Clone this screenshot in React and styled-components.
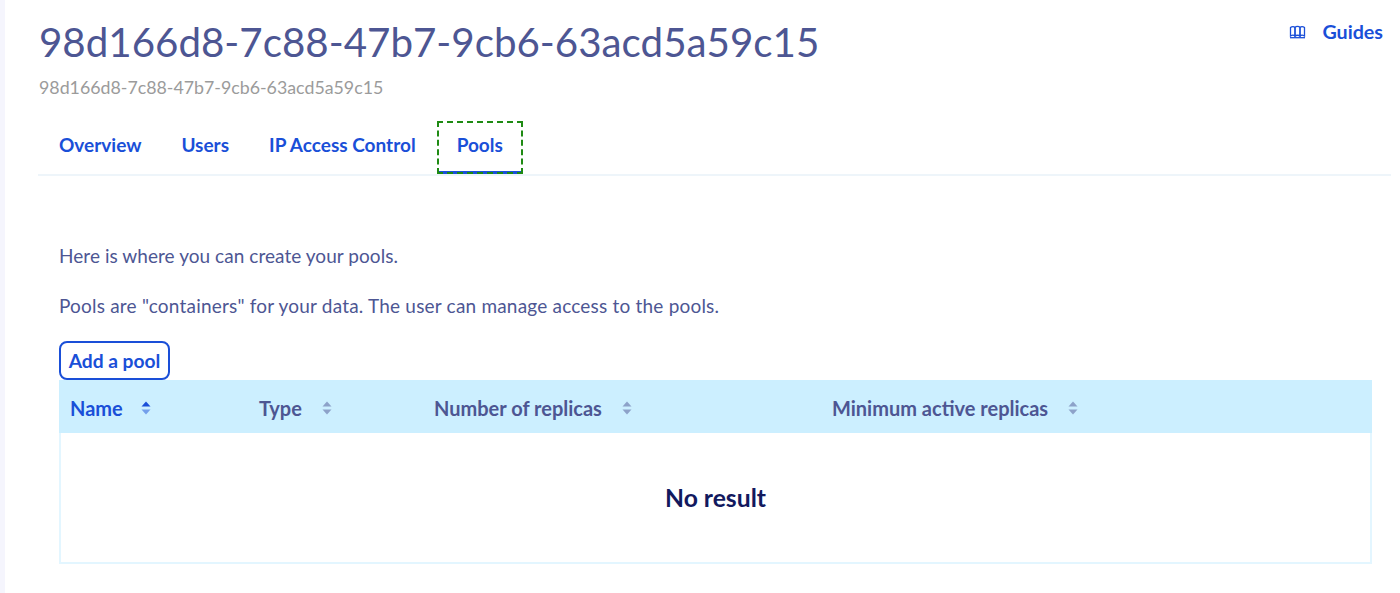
import styled, { createGlobalStyle } from "styled-components";

const GlobalStyle = createGlobalStyle`
  html, body {
    margin: 0;
    padding: 0;
    background: #fff;
  }
  body {
    font-family: "Lato", "Noto Sans", sans-serif;
    color: #4d5693;
  }
`;

const Page = styled.div`
  height: 593px;
  overflow: hidden;
  box-sizing: border-box;
  border-left: 5px solid #f5f5fd;
  padding: 0 9px 0 33px;
`;

const Header = styled.header`
  display: flex;
  justify-content: space-between;
  align-items: flex-start;
  height: 121px;
  padding-left: 1px;
  padding-right: 8px;
`;

const Titles = styled.div`
  padding-top: 16px;
`;

const Title = styled.h1`
  margin: 0;
  font-size: 40.3px;
  line-height: 52px;
  font-weight: 400;
  color: #4d5693;
`;

const Subtitle = styled.div`
  margin-top: 8px;
  font-size: 17.8px;
  line-height: 22px;
  color: #9b9b9b;
`;

const GuidesLink = styled.a`
  display: flex;
  align-items: center;
  gap: 16px;
  margin-top: 21px;
  font-size: 19.7px;
  line-height: 22px;
  font-weight: 700;
  color: #1a4fd8;
`;

const Tabs = styled.nav`
  display: flex;
  height: 55px;
  box-sizing: border-box;
  padding-left: 1px;
  border-bottom: 2px solid #eef5fa;
`;

const Tab = styled.a`
  box-sizing: border-box;
  height: 53px;
  padding: 0 20px 4px;
  margin-left: ${({ $active }) => ($active ? "1px" : "0")};
  display: flex;
  align-items: center;
  font-size: 19px;
  font-weight: 700;
  color: #1a4fd8;
  border-bottom: 3px solid ${({ $active }) => ($active ? "#1a4fd8" : "transparent")};
  outline: ${({ $active }) => ($active ? "2px dashed #1f8a13" : "none")};
  outline-offset: -2px;
`;

const Content = styled.section`
  padding: 0 19px 0 21px;
`;

const Paragraph = styled.p`
  margin: 0;
  font-size: 19px;
  line-height: 24px;
  letter-spacing: ${({ $spacing }) => $spacing}px;
`;

const Intro = styled(Paragraph)`
  margin-top: 68px;
`;

const Second = styled(Paragraph)`
  margin-top: 26px;
`;

const AddButton = styled.button`
  display: block;
  box-sizing: border-box;
  margin-top: 23px;
  width: 111px;
  height: 39px;
  padding: 0;
  background: #fff;
  border: 2px solid #1a4fd8;
  border-radius: 8px;
  font-family: inherit;
  font-size: 19.2px;
  font-weight: 700;
  color: #1a4fd8;
`;

const Table = styled.div`
  box-sizing: border-box;
  height: 184px;
  border: 2px solid #e3f6ff;
  border-top: 0;
  display: flex;
  flex-direction: column;
`;

const HeadRow = styled.div`
  display: grid;
  grid-template-columns: 189px 175px 398px 1fr;
  height: 53px;
  background: #ccefff;
  margin: 0 -2px;
`;

const HeadCell = styled.div`
  display: flex;
  align-items: center;
  gap: ${({ $gap }) => $gap}px;
  padding: 2px 0 0 11px;
  font-size: 20px;
  font-weight: 700;
  color: ${({ $active }) => ($active ? "#1a4fd8" : "#4d5693")};
`;

const Empty = styled.div`
  flex: 1;
  display: flex;
  align-items: center;
  justify-content: center;
  font-size: 24.7px;
  font-weight: 700;
  color: #12195e;
`;

function BookIcon() {
  return (
    <svg width="17" height="14" viewBox="0 0 17 14" fill="none" stroke="#1a4fd8" strokeWidth="1.3">
      <path d="M1.5 2.5 C3 1.2 5 1.2 6 2.5 L6 11 C5 10 3 10 1.5 11 Z" />
      <path d="M6 2.5 C7 1 10 1 11 2.5 L11 11 C10 10 7 10 6 11 Z" />
      <path d="M11 2.5 C12 1.2 14 1.2 15.5 2.5 L15.5 11 C14 10 12 10 11 11 Z" />
      <path d="M1 12.7 H16" />
    </svg>
  );
}

function SortIcon({ active }) {
  const color = active ? "#1a4fd8" : "#4d5693";
  return (
    <svg width="10" height="14" viewBox="0 0 10 14">
      <path d="M5 0.5 L9.5 5.5 H0.5 Z" fill={color} opacity={active ? 1 : 0.5} />
      <path d="M5 13.5 L9.5 8.5 H0.5 Z" fill={color} opacity={0.5} />
    </svg>
  );
}

const columns = [
  { label: "Name", gap: 18, active: true },
  { label: "Type", gap: 20 },
  { label: "Number of replicas", gap: 20 },
  { label: "Minimum active replicas", gap: 20 },
];

export default function App() {
  return (
    <>
      <GlobalStyle />
      <Page>
        <Header>
          <Titles>
            <Title>98d166d8-7c88-47b7-9cb6-63acd5a59c15</Title>
            <Subtitle>98d166d8-7c88-47b7-9cb6-63acd5a59c15</Subtitle>
          </Titles>
          <GuidesLink>
            <BookIcon />
            Guides
          </GuidesLink>
        </Header>
        <Tabs>
          <Tab>Overview</Tab>
          <Tab>Users</Tab>
          <Tab>IP Access Control</Tab>
          <Tab $active>Pools</Tab>
        </Tabs>
        <Content>
          <Intro $spacing={0.05}>Here is where you can create your pools.</Intro>
          <Second $spacing={0.2}>Pools are "containers" for your data. The user can manage access to the pools.</Second>
          <AddButton>Add a pool</AddButton>
          <Table>
            <HeadRow>
              {columns.map((col) => (
                <HeadCell key={col.label} $active={col.active} $gap={col.gap}>
                  {col.label}
                  <SortIcon active={col.active} />
                </HeadCell>
              ))}
            </HeadRow>
            <Empty>No result</Empty>
          </Table>
        </Content>
      </Page>
    </>
  );
}
